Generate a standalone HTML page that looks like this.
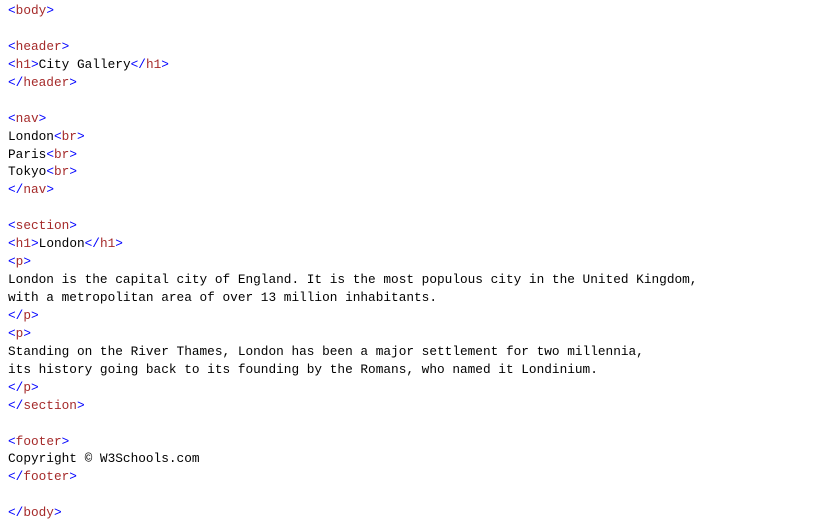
<!DOCTYPE html>
<html><head><meta charset="utf-8"><style>
html,body{margin:0;padding:0;background:#fff;}
pre{margin:0;padding:2px 0 0 8px;font-family:"Liberation Mono",monospace;font-size:12.77px;line-height:17.93px;color:#000;}
b{font-weight:normal;color:#0000ff}
i{font-style:normal;color:#a52a2a}
</style></head><body><pre><b>&lt;</b><i>body</i><b>&gt;</b>

<b>&lt;</b><i>header</i><b>&gt;</b>
<b>&lt;</b><i>h1</i><b>&gt;</b>City Gallery<b>&lt;/</b><i>h1</i><b>&gt;</b>
<b>&lt;/</b><i>header</i><b>&gt;</b>

<b>&lt;</b><i>nav</i><b>&gt;</b>
London<b>&lt;</b><i>br</i><b>&gt;</b>
Paris<b>&lt;</b><i>br</i><b>&gt;</b>
Tokyo<b>&lt;</b><i>br</i><b>&gt;</b>
<b>&lt;/</b><i>nav</i><b>&gt;</b>

<b>&lt;</b><i>section</i><b>&gt;</b>
<b>&lt;</b><i>h1</i><b>&gt;</b>London<b>&lt;/</b><i>h1</i><b>&gt;</b>
<b>&lt;</b><i>p</i><b>&gt;</b>
London is the capital city of England. It is the most populous city in the United Kingdom,
with a metropolitan area of over 13 million inhabitants.
<b>&lt;/</b><i>p</i><b>&gt;</b>
<b>&lt;</b><i>p</i><b>&gt;</b>
Standing on the River Thames, London has been a major settlement for two millennia,
its history going back to its founding by the Romans, who named it Londinium.
<b>&lt;/</b><i>p</i><b>&gt;</b>
<b>&lt;/</b><i>section</i><b>&gt;</b>

<b>&lt;</b><i>footer</i><b>&gt;</b>
Copyright &copy; W3Schools.com
<b>&lt;/</b><i>footer</i><b>&gt;</b>

<b>&lt;/</b><i>body</i><b>&gt;</b></pre></body></html>
